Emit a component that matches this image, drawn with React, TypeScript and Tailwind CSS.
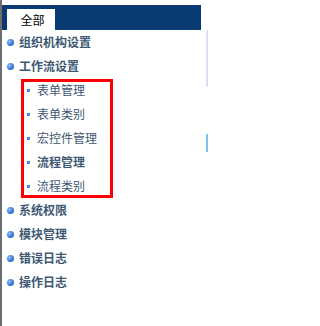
import React from "react";

const font = { fontFamily: '"Noto Sans CJK SC", "Noto Sans", sans-serif' };

function MainItem({ label }: { label: string }) {
  return (
    <div className="h-[24px] flex items-center pl-[5px]">
      <span className="w-[7px] h-[7px] rounded-full bg-[radial-gradient(circle_at_35%_35%,#8cc0f5_0%,#2f7ad6_55%,#1f5fb0_100%)] shrink-0" />
      <span className="ml-[5px] text-[12px] leading-none font-bold text-[#3e5873]">{label}</span>
    </div>
  );
}

function SubItem({ label, bold }: { label: string; bold?: boolean }) {
  return (
    <div className="h-[24px] flex items-center pl-[6px]">
      <span className="w-[3px] h-[3px] bg-[#3f8fe3] shrink-0" />
      <span className={`ml-[7px] text-[12px] leading-none text-[#3e5873] ${bold ? "font-bold" : "font-normal"}`}>{label}</span>
    </div>
  );
}

export default function App() {
  return (
    <div className="flex w-[208px] h-[326px] bg-white overflow-hidden" style={font}>
      <div className="w-[201px] shrink-0 border-l-2 border-[#6e6e6e] pt-[5px]">
        <div className="h-[25px] bg-[#0a3a72] flex items-end pl-[5px]">
          <div className="w-[48px] h-[21px] bg-white flex items-center justify-center pl-[3px] text-[12px] text-black leading-none">
            全部
          </div>
        </div>
        <div>
          <MainItem label="组织机构设置" />
          <MainItem label="工作流设置" />
          <div className="relative ml-[19px] w-[92px]">
            <SubItem label="表单管理" />
            <SubItem label="表单类别" />
            <SubItem label="宏控件管理" />
            <SubItem label="流程管理" bold />
            <SubItem label="流程类别" />
            <div className="absolute left-0 right-0 top-[1px] bottom-0 border-[3px] border-[#ff0000] pointer-events-none" />
          </div>
          <MainItem label="系统权限" />
          <MainItem label="模块管理" />
          <MainItem label="错误日志" />
          <MainItem label="操作日志" />
        </div>
      </div>
      <div className="ml-[5px] flex-1 pt-[30px]">
        <div className="h-[57px] border border-[#dcdcf2] rounded-tl-[2px] rounded-bl-[2px]">
          <div className="h-[26px] bg-[#f0f0fb]" />
        </div>
        <div className="mt-[47px] h-[18px] border border-[#7fc4e6] bg-[#dcf0fa]" />
      </div>
    </div>
  );
}
